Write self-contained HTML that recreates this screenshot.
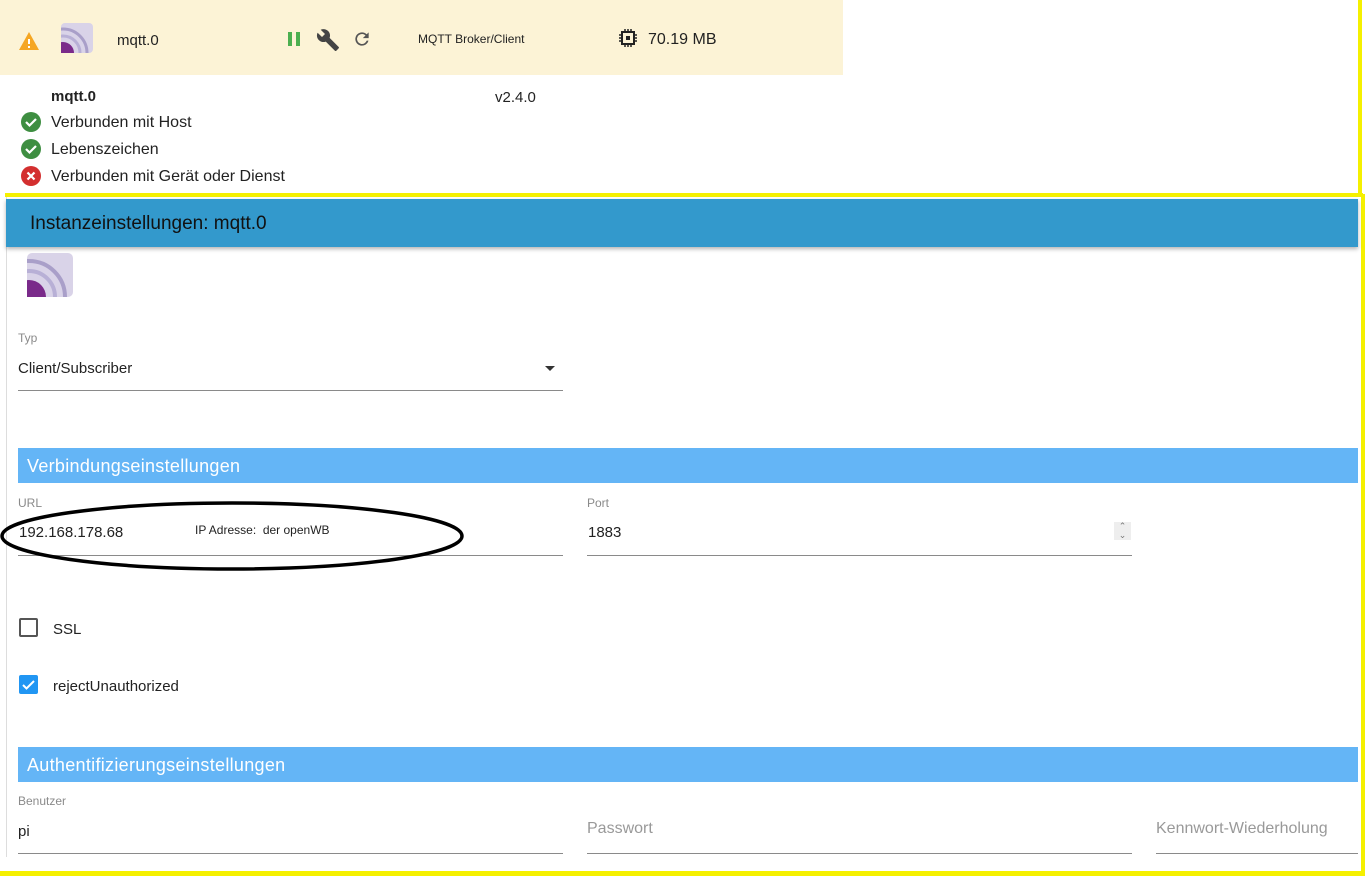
<!DOCTYPE html>
<html><head><meta charset="utf-8"><style>
body{margin:0;width:1371px;height:876px;position:relative;overflow:hidden;background:#fff;font-family:"Liberation Sans",sans-serif;color:#222}
.a{position:absolute}
.lbl{position:absolute;font-size:12px;color:#8a8a8a}
.val{position:absolute;font-size:15px;color:#222}
.ul{position:absolute;height:1px;background:#8a8a8a}
.sec{position:absolute;left:18px;width:1340px;height:35px;background:#64b5f6;color:#fff;font-size:18px;line-height:36px;padding-left:9px;box-sizing:border-box;letter-spacing:.3px}
</style></head><body>
<div class="a" style="left:0;top:0;width:843px;height:75px;background:#fcf3d6"></div>
<svg class="a" style="left:18px;top:31px" width="22" height="20"><path d="M11 1 L21 19 L1 19 Z" fill="#f5a623"/><rect x="10" y="8" width="2" height="5" fill="#fff"/><rect x="10" y="15" width="2" height="2" fill="#fff"/></svg>
<svg class="a" style="left:61px;top:23px" width="32" height="30"><rect width="32" height="30" rx="4" fill="#d9d3e8"/><circle cx="2" cy="30" r="24" fill="none" stroke="#a99fc9" stroke-width="3"/><circle cx="2" cy="30" r="17" fill="none" stroke="#b8b0d6" stroke-width="3"/><circle cx="2" cy="30" r="11" fill="#7a2a8a"/></svg>
<div class="a" style="left:117px;top:32px;font-size:15px">mqtt.0</div>
<div class="a" style="left:288px;top:32px;width:4px;height:14px;background:#4caf50"></div>
<div class="a" style="left:296px;top:32px;width:4px;height:14px;background:#4caf50"></div>
<svg class="a" style="left:316px;top:28px" width="24" height="24" viewBox="0 0 24 24"><path fill="#444" d="M22.7 19l-9.1-9.1c.9-2.3.4-5-1.5-6.9-2-2-5-2.4-7.4-1.3L9 6 6 9 1.6 4.7C.4 7.1.9 10.1 2.9 12.1c1.9 1.9 4.6 2.4 6.9 1.5l9.1 9.1c.4.4 1 .4 1.4 0l2.3-2.3c.5-.4.5-1.1.1-1.4z"/></svg>
<svg class="a" style="left:352px;top:29px" width="20" height="20" viewBox="0 0 24 24"><path fill="#555" d="M17.65 6.35A7.95 7.95 0 0 0 12 4a8 8 0 1 0 7.73 10h-2.08A6 6 0 1 1 12 6c1.66 0 3.14.69 4.22 1.78L13 11h7V4l-2.35 2.35z"/></svg>
<div class="a" style="left:418px;top:32px;font-size:12px">MQTT Broker/Client</div>
<svg class="a" style="left:619px;top:29px" width="18" height="18" viewBox="0 0 18 18"><rect x="3" y="3" width="12" height="12" fill="none" stroke="#222" stroke-width="2"/><rect x="7" y="7" width="4" height="4" fill="#222"/><path d="M6 0v3M9 0v3M12 0v3M6 15v3M9 15v3M12 15v3M0 6h3M0 9h3M0 12h3M15 6h3M15 9h3M15 12h3" stroke="#222" stroke-width="1.5"/></svg>
<div class="a" style="left:648px;top:31px;font-size:16px">70.19 MB</div>
<div class="a" style="left:51px;top:88px;font-size:15px;font-weight:bold">mqtt.0</div>
<div class="a" style="left:495px;top:89px;font-size:15px">v2.4.0</div>
<svg class="a" style="left:21px;top:112px" width="20" height="20"><circle cx="10" cy="10" r="10" fill="#3e8e41"/><path d="M5 10l3.5 3.5L15 7" stroke="#fff" stroke-width="2.2" fill="none"/></svg>
<div class="a" style="left:51px;top:114px;font-size:16px">Verbunden mit Host</div>
<svg class="a" style="left:21px;top:139px" width="20" height="20"><circle cx="10" cy="10" r="10" fill="#3e8e41"/><path d="M5 10l3.5 3.5L15 7" stroke="#fff" stroke-width="2.2" fill="none"/></svg>
<div class="a" style="left:51px;top:141px;font-size:16px">Lebenszeichen</div>
<svg class="a" style="left:21px;top:166px" width="20" height="20"><circle cx="10" cy="10" r="10" fill="#d32f2f"/><path d="M6.5 6.5l7 7M13.5 6.5l-7 7" stroke="#fff" stroke-width="2.2"/></svg>
<div class="a" style="left:51px;top:168px;font-size:16px">Verbunden mit Gerät oder Dienst</div>
<!-- yellow lines -->
<div class="a" style="left:1358px;top:0;width:4px;height:196px;background:#f5f000"></div>
<div class="a" style="left:1361px;top:194px;width:4px;height:682px;background:#f5f000"></div>
<div class="a" style="left:5px;top:193px;width:1358px;height:4px;background:#f5f000"></div>
<div class="a" style="left:0;top:871px;width:1365px;height:5px;background:#f5f000"></div>
<div class="a" style="left:6px;top:197px;width:1px;height:660px;background:#ddd"></div>
<div class="a" style="left:6px;top:199px;width:1352px;height:48px;background:#3399cc;box-shadow:0 2px 4px rgba(0,0,0,.3)"></div>
<div class="a" style="left:30px;top:213px;font-size:19px;color:#111">Instanzeinstellungen: mqtt.0</div>
<svg class="a" style="left:27px;top:253px" width="46" height="44"><rect width="46" height="44" rx="5" fill="#d9d3e8"/><circle cx="2" cy="44" r="36" fill="none" stroke="#a99fc9" stroke-width="4"/><circle cx="2" cy="44" r="26" fill="none" stroke="#b8b0d6" stroke-width="4"/><circle cx="2" cy="44" r="17" fill="#7a2a8a"/></svg>
<div class="lbl" style="left:18px;top:331px">Typ</div>
<div class="val" style="left:18px;top:360px">Client/Subscriber</div>
<div class="a" style="left:545px;top:366px;width:0;height:0;border-left:5px solid transparent;border-right:5px solid transparent;border-top:5px solid #333"></div>
<div class="ul" style="left:18px;top:390px;width:545px"></div>
<div class="sec" style="top:448px">Verbindungseinstellungen</div>
<div class="lbl" style="left:18px;top:496px">URL</div>
<div class="val" style="left:19px;top:524px">192.168.178.68</div>
<div class="a" style="left:195px;top:523px;font-size:12px">IP Adresse:&nbsp; der openWB</div>
<div class="ul" style="left:18px;top:555px;width:545px"></div>
<svg class="a" style="left:0;top:498px" width="470" height="76"><ellipse cx="232" cy="38" rx="230" ry="33" fill="none" stroke="#000" stroke-width="3.5"/></svg>
<div class="lbl" style="left:587px;top:496px">Port</div>
<div class="val" style="left:588px;top:524px">1883</div>
<div class="a" style="left:1114px;top:522px;width:17px;height:18px;background:#eee;font-size:9px;color:#777;text-align:center;line-height:9px">⌃<br>⌄</div>
<div class="ul" style="left:587px;top:555px;width:545px"></div>
<div class="a" style="left:19px;top:618px;width:15px;height:15px;border:2px solid #555;border-radius:2px"></div>
<div class="val" style="left:53px;top:621px">SSL</div>
<div class="a" style="left:19px;top:675px;width:19px;height:19px;background:#2196f3;border-radius:2px"></div>
<svg class="a" style="left:19px;top:675px" width="19" height="19"><path d="M4 10l3.5 3.5L15 6" stroke="#fff" stroke-width="2" fill="none"/></svg>
<div class="val" style="left:53px;top:678px">rejectUnauthorized</div>
<div class="sec" style="top:747px">Authentifizierungseinstellungen</div>
<div class="lbl" style="left:18px;top:794px">Benutzer</div>
<div class="val" style="left:18px;top:823px">pi</div>
<div class="ul" style="left:18px;top:853px;width:545px"></div>
<div class="a" style="left:587px;top:820px;font-size:16px;color:#999">Passwort</div>
<div class="ul" style="left:587px;top:853px;width:545px"></div>
<div class="a" style="left:1156px;top:820px;font-size:16px;color:#999">Kennwort-Wiederholung</div>
<div class="ul" style="left:1156px;top:853px;width:202px"></div>
</body></html>
